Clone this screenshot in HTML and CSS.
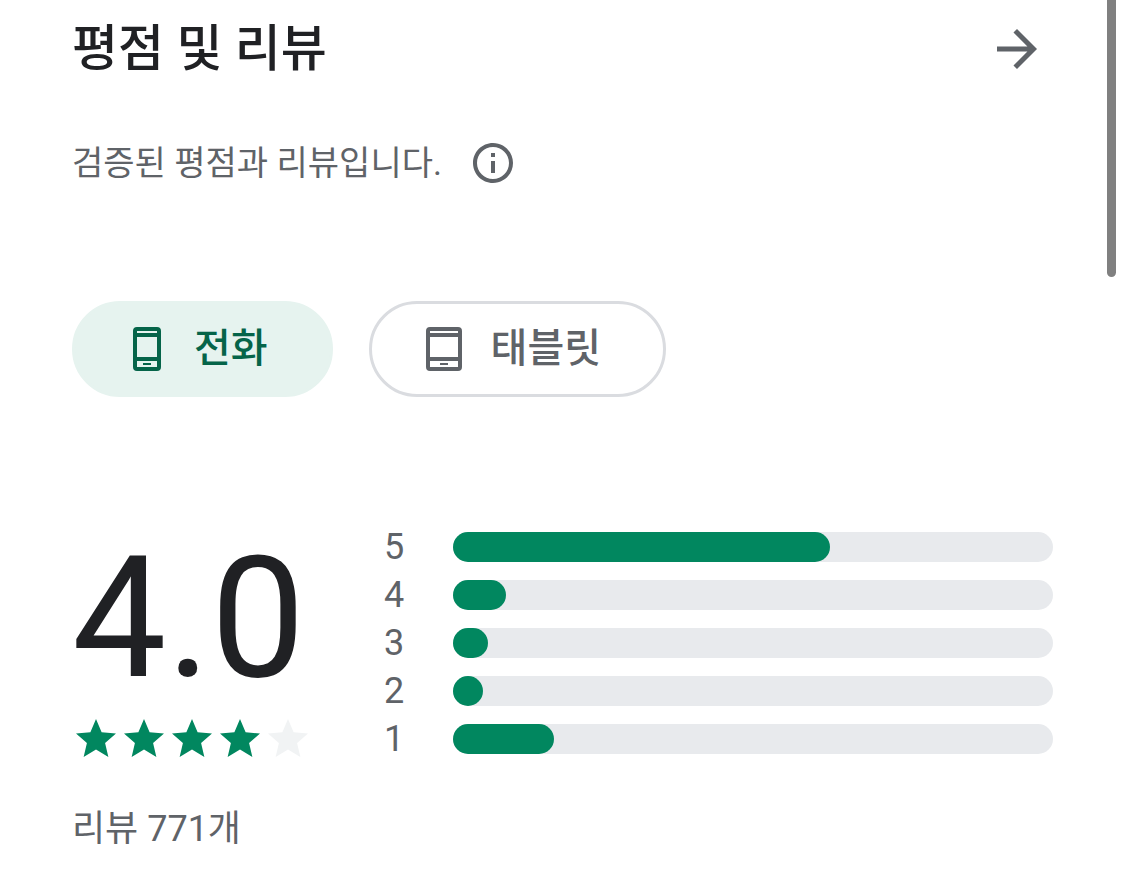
FILE: index.html
```
<!DOCTYPE html>
<html lang="ko">
<head>
  <meta charset="UTF-8" />
  <meta name="viewport" content="width=device-width, initial-scale=1.0" />
  <title>평점 및 리뷰</title>
  <link rel="stylesheet" href="styles.css">
</head>
<body>
  <main class="reviews">
    <header class="reviews-header">
      <h2>평점 및 리뷰</h2>
      <button class="icon-button" aria-label="평점 및 리뷰 자세히 알아보기">
        <svg width="60" height="60" viewBox="0 0 24 24"><path d="M12 4l-1.41 1.41L16.17 11H4v2h12.17l-5.58 5.59L12 20l8-8z" /></svg>
      </button>
    </header>

    <div class="verified">
      <p>검증된 평점과 리뷰입니다.</p>
      <button class="info-button" aria-label="정보">
        <svg width="48" height="48" viewBox="0 0 24 24"><path d="M11 7h2v2h-2zm0 4h2v6h-2zm1-9C6.48 2 2 6.48 2 12s4.48 10 10 10 10-4.48 10-10S17.52 2 12 2zm0 18c-4.41 0-8-3.59-8-8s3.59-8 8-8 8 3.59 8 8-3.59 8-8 8z" /></svg>
      </button>
    </div>

    <div class="chips">
      <button class="chip active" aria-pressed="true">
        <svg width="54" height="54" viewBox="0 0 54 54"><path fill-rule="evenodd" d="M17 5H37a4 4 0 0 1 4 4V45a4 4 0 0 1-4 4H17a4 4 0 0 1-4-4V9a4 4 0 0 1 4-4zM17 9v2h20v-2zM17 15v20h20v-20zM17 39v6h20v-6zM23 41h8v2h-8z" /></svg>
        <span>전화</span>
      </button>
      <button class="chip" aria-pressed="false">
        <svg width="54" height="54" viewBox="0 0 54 54"><path fill-rule="evenodd" d="M13 5H41a4 4 0 0 1 4 4V45a4 4 0 0 1-4 4H13a4 4 0 0 1-4-4V9a4 4 0 0 1 4-4zM13 9v2h28v-2zM13 15v20h28v-20zM13 39v6h28v-6zM23 41h8v2h-8z" /></svg>
        <span>태블릿</span>
      </button>
    </div>

    <section class="rating">
      <div class="summary">
        <div class="score">4.0</div>
        <div class="stars" role="img" aria-label="별표 5개 만점에 4.0개를 받았습니다.">
          <svg class="star" viewBox="0 0 24 24"><path d="M12 17.27L18.18 21l-1.64-7.03L22 9.24l-7.19-.61L12 2 9.19 8.63 2 9.24l5.46 4.73L5.82 21z" /></svg>
          <svg class="star" viewBox="0 0 24 24"><path d="M12 17.27L18.18 21l-1.64-7.03L22 9.24l-7.19-.61L12 2 9.19 8.63 2 9.24l5.46 4.73L5.82 21z" /></svg>
          <svg class="star" viewBox="0 0 24 24"><path d="M12 17.27L18.18 21l-1.64-7.03L22 9.24l-7.19-.61L12 2 9.19 8.63 2 9.24l5.46 4.73L5.82 21z" /></svg>
          <svg class="star" viewBox="0 0 24 24"><path d="M12 17.27L18.18 21l-1.64-7.03L22 9.24l-7.19-.61L12 2 9.19 8.63 2 9.24l5.46 4.73L5.82 21z" /></svg>
          <svg class="star empty" viewBox="0 0 24 24"><path d="M12 17.27L18.18 21l-1.64-7.03L22 9.24l-7.19-.61L12 2 9.19 8.63 2 9.24l5.46 4.73L5.82 21z" /></svg>
        </div>
      </div>
      <div class="histogram">
        <div class="row"><span class="label">5</span><div class="track"><div class="fill" style="width: 62.8%"></div></div></div>
        <div class="row"><span class="label">4</span><div class="track"><div class="fill" style="width: 8.8%"></div></div></div>
        <div class="row"><span class="label">3</span><div class="track"><div class="fill" style="width: 5.8%"></div></div></div>
        <div class="row"><span class="label">2</span><div class="track"><div class="fill" style="width: 5%"></div></div></div>
        <div class="row"><span class="label">1</span><div class="track"><div class="fill" style="width: 16.8%"></div></div></div>
      </div>
    </section>

    <p class="count">리뷰 771개</p>
  </main>
  <div class="scroll-thumb"></div>
</body>
</html>
```
FILE: styles.css
```
* {
  margin: 0;
  padding: 0;
  box-sizing: border-box;
}
body {
  font-family: Roboto, "Noto Sans CJK KR", sans-serif;
  background: #fff;
  color: #5f6368;
  font-size: 34px;
  line-height: 48px;
}
button {
  border: none;
  background: none;
  color: inherit;
  font: inherit;
  cursor: pointer;
}
svg {
  display: block;
  flex: none;
  fill: currentColor;
}
.reviews {
  padding: 13px 72px 36px;
}
.reviews-header {
  display: flex;
  justify-content: space-between;
  align-items: center;
}
.reviews-header h2 {
  font-size: 50px;
  font-weight: 500;
  line-height: 72px;
  color: #202124;
}
.icon-button {
  display: flex;
  justify-content: center;
  align-items: center;
  width: 72px;
  height: 72px;
}
.verified {
  display: flex;
  align-items: center;
  gap: 27px;
  margin-top: 54px;
}
.chips {
  display: flex;
  gap: 36px;
  margin-top: 114px;
}
.chip {
  display: flex;
  align-items: center;
  gap: 20px;
  height: 96px;
  padding: 0 62px 0 45px;
  border: 3px solid #dadce0;
  border-radius: 48px;
  font-size: 40px;
  font-weight: 500;
}
.chip.active {
  background: #e6f3ef;
  border-color: #e6f3ef;
  color: #056449;
}
.rating {
  display: flex;
  gap: 72px;
  margin-top: 126px;
}
.score {
  font-size: 168px;
  line-height: 192px;
  color: #202124;
}
.stars {
  display: flex;
  color: #01875f;
}
.star {
  width: 48px;
  height: 48px;
}
.star.empty {
  color: #f1f3f4;
}
.histogram {
  flex: 1;
}
.row {
  display: flex;
  align-items: center;
  gap: 48px;
  height: 48px;
  font-size: 36px;
}
.label {
  width: 21px;
}
.track {
  flex: 1;
  height: 30px;
  border-radius: 15px;
  background: #e8eaed;
}
.fill {
  height: 100%;
  min-width: 30px;
  border-radius: 15px;
  background: #01875f;
}
.count {
  margin-top: 42px;
  font-size: 36px;
}
.scroll-thumb {
  position: fixed;
  top: 0;
  right: 9px;
  width: 9px;
  height: 277px;
  border-radius: 0 0 5px 5px;
  background: #808080;
}
```
